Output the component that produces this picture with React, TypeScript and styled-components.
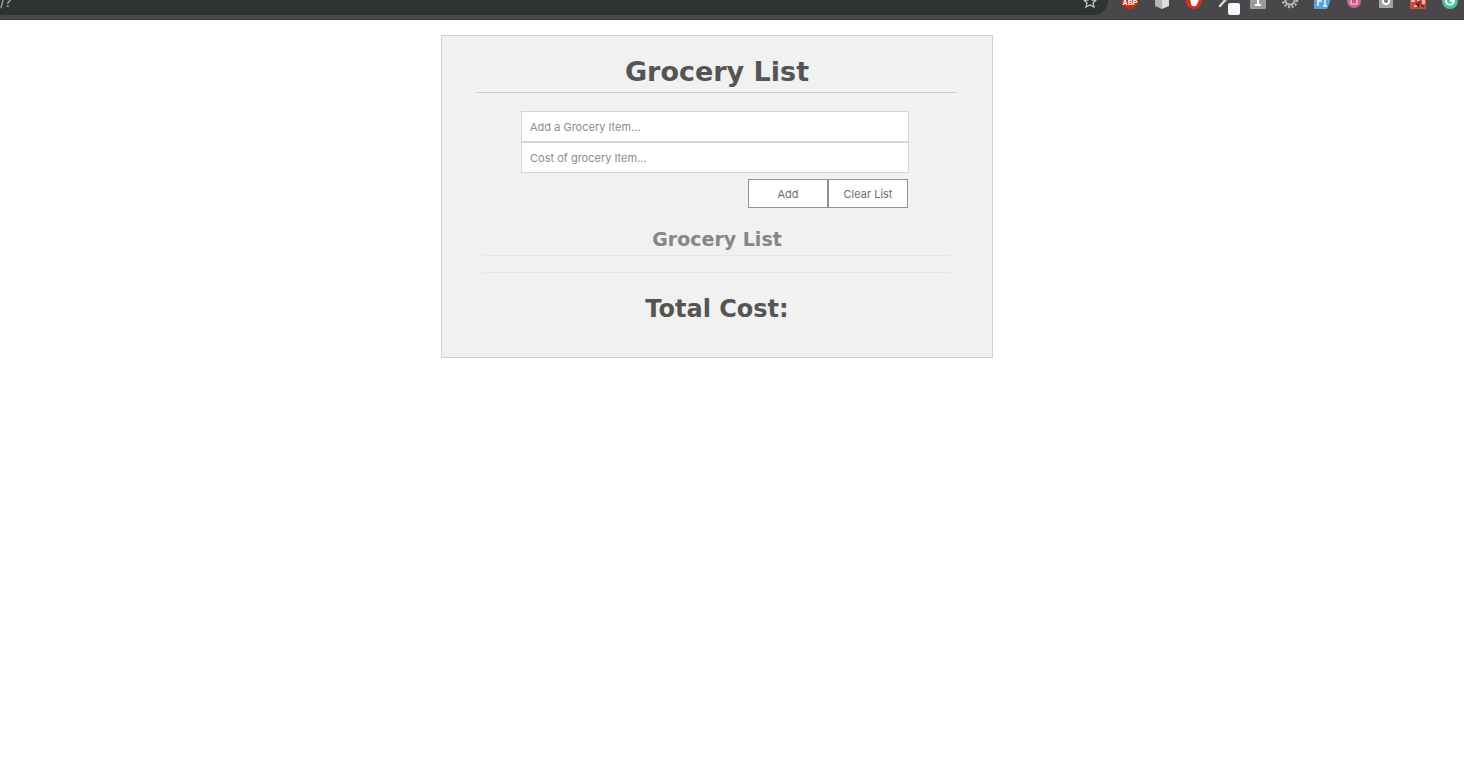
import React, { useState } from "react";
import styled, { createGlobalStyle } from "styled-components";

const GlobalStyle = createGlobalStyle`
  * { box-sizing: border-box; }
  body { margin: 0; background: #fff; font-family: Inter, "Liberation Sans", sans-serif; }
  h1, h2, h3 { margin: 0; font-family: Verdana, "DejaVu Sans", sans-serif; font-weight: 700; text-align: center; }
`;

const Toolbar = styled.header`
  display: flex;
  align-items: flex-start;
  gap: 6px;
  height: 20px;
  overflow: hidden;
  background: #4a474b;
  border-bottom: 1px solid #413639;
`;

const AddressBar = styled.div`
  flex: 1;
  display: flex;
  justify-content: space-between;
  height: 15px;
  padding-right: 10px;
  background: #2f3334;
  border-bottom-right-radius: 14px 15px;
`;

const AddressText = styled.span`
  height: 10px;
  font-size: 13px;
  line-height: 4px;
  color: #b4b6b7;
`;

const Extensions = styled.div`
  flex: none;
  display: flex;
  width: 350px;
  overflow: hidden;
`;

const Icon = styled.svg`
  flex: none;
  display: block;
  width: 32px;
  height: 19px;
`;

const StarIcon = styled.svg`
  display: block;
  width: 16px;
  height: 15px;
`;

const Page = styled.main`
  display: flex;
  justify-content: center;
  padding: 15px 30px 15px 0;
`;

const Card = styled.section`
  width: 552px;
  max-width: 100%;
  padding: 18px 35px 33px;
  background: #f1f1f1;
  border: 1px solid #d0d0d0;
`;

const Title = styled.h1`
  padding-bottom: 2px;
  border-bottom: 1px solid #d0d0d0;
  font-size: 27px;
  line-height: 36px;
  color: #555;
`;

const Form = styled.form`
  display: flex;
  flex-direction: column;
  margin: 18px 48px 0 44px;
`;

const Field = styled.input`
  width: 100%;
  height: 31px;
  padding: 0 8px;
  border: 1px solid #d6d6d6;
  border-radius: 0;
  background: #fff;
  color: #555;
  font: 11px Inter, "Liberation Sans", sans-serif;
  &::placeholder { color: #8c8c8c; opacity: 1; }
`;

const Actions = styled.div`
  display: flex;
  justify-content: flex-end;
  padding: 6px 1px 0 0;
`;

const Button = styled.button`
  width: 80px;
  height: 29px;
  padding: 0;
  border: 1px solid #929292;
  border-radius: 0;
  background: #fff;
  color: #6c6c6c;
  font: 11px Inter, "Liberation Sans", sans-serif;
`;

const ListSection = styled.div`
  margin: 19px 6px 0;
`;

const ListTitle = styled.h3`
  padding-bottom: 4px;
  border-bottom: 1px solid #e6e6e6;
  font-size: 19px;
  line-height: 24px;
  color: #868686;
`;

const Items = styled.ul`
  min-height: 17px;
  margin: 0;
  padding: 8px 0;
  border-bottom: 1px solid #e6e6e6;
  list-style: none;
  font-size: 11px;
  line-height: 20px;
  color: #555;
`;

const Total = styled.h2`
  margin-top: 21px;
  font-size: 24px;
  line-height: 30px;
  color: #555;
`;

function ExtensionIcons() {
  return (
    <Extensions>
      <Icon viewBox="0 0 32 19" role="img" aria-label="Ad blocker">
        <path d="M8-3 13-8h6l5 5v7l-5 5h-6L8 4Z" fill="#c92a14" />
        <text x="16" y="5" textAnchor="middle" fontFamily="Liberation Sans, sans-serif" fontSize="7" fontWeight="700" fill="#fff">ABP</text>
      </Icon>
      <Icon viewBox="0 0 32 19" aria-hidden="true">
        <path d="M9-4 16-1v10L9 6Z" fill="#b5b5b5" />
        <path d="M23-4 16-1v10l7-3Z" fill="#dedede" />
      </Icon>
      <Icon viewBox="0 0 32 19" aria-hidden="true">
        <circle cx="16" cy="1" r="8" fill="#d92d22" />
        <path d="M12-2h7v3l1-2 1 1-2 4c-1 3-5 3-6 0Z" fill="#fff" />
      </Icon>
      <Icon viewBox="0 0 32 19" aria-hidden="true">
        <path d="m10 6 7-8" stroke="#d5d5d5" strokeWidth="2.5" strokeLinecap="round" />
        <rect x="18" y="3" width="12" height="12" rx="2" fill="#f7f8fd" />
      </Icon>
      <Icon viewBox="0 0 32 19" aria-hidden="true">
        <rect x="8" y="-7" width="16" height="16" rx="1" fill="#9b9b9b" />
        <path d="M13 5h6M16 5v-8" stroke="#fff" strokeWidth="2" />
      </Icon>
      <Icon viewBox="0 0 32 19" aria-hidden="true">
        <circle cx="16" cy="0" r="4.5" fill="none" stroke="#b9b9b9" strokeWidth="2.5" />
        <circle cx="16" cy="0" r="7" fill="none" stroke="#b9b9b9" strokeWidth="2.5" strokeDasharray="2 1.66" />
        <circle cx="16" cy="0" r="3.5" fill="#555" />
      </Icon>
      <Icon viewBox="0 0 32 19" aria-hidden="true">
        <path d="M8-7h16v9l-3 7H8Z" fill="#5aa2dc" />
        <path d="M12 6v-8M12 1h4M19 0v6M17 6h4" stroke="#eaf4fd" strokeWidth="1.5" />
      </Icon>
      <Icon viewBox="0 0 32 19" aria-hidden="true">
        <circle cx="16" cy="1" r="7" fill="#d3618f" />
        <rect x="13" y="-3" width="6" height="7" rx="1" fill="#c85584" stroke="#f7d9e5" strokeWidth="1.2" />
      </Icon>
      <Icon viewBox="0 0 32 19" aria-hidden="true">
        <rect x="9" y="-7" width="14" height="15" rx="1" fill="#a3a3a3" />
        <circle cx="16" cy="1" r="3" fill="#777" stroke="#fff" strokeWidth="2" />
      </Icon>
      <Icon viewBox="0 0 32 19" aria-hidden="true">
        <path d="M8-7h16V9H8Z" fill="#c24d3b" />
        <path d="M9 0h4v2H9ZM15-1h3v2h-3ZM20 0h3v4h-3ZM12 5h3v2h-3Z" fill="#f1b2a0" />
        <path d="m14 3 3 4M18 1l-2 5M19 5l3 2" stroke="#542019" strokeWidth="1.5" />
      </Icon>
      <Icon viewBox="0 0 32 19" aria-hidden="true">
        <circle cx="16" cy="1" r="8" fill="#4cc09c" />
        <path d="M12-2v2c0 6 7 6 8 1h-4" fill="none" stroke="#e7fff7" strokeWidth="1.8" />
      </Icon>
    </Extensions>
  );
}

type Item = { name: string; cost: number };

export default function App() {
  const [items, setItems] = useState<Item[]>([]);
  const [name, setName] = useState("");
  const [cost, setCost] = useState("");
  const total = items.reduce((sum, item) => sum + item.cost, 0);

  const addItem = (event: React.FormEvent) => {
    event.preventDefault();
    if (!name) return;
    setItems([...items, { name, cost: Number(cost) || 0 }]);
    setName("");
    setCost("");
  };

  return (
    <>
      <GlobalStyle />
      <Toolbar>
        <AddressBar>
          <AddressText>/?</AddressText>
          <StarIcon viewBox="0 0 16 15" role="img" aria-label="Bookmark">
            <path d="m8-5 2 5h4l-3 3 1 4-4-2-4 2 1-4-3-3h4Z" fill="none" stroke="#c4c6c7" strokeWidth="1.3" />
          </StarIcon>
        </AddressBar>
        <ExtensionIcons />
      </Toolbar>
      <Page>
        <Card>
          <Title>Grocery List</Title>
          <Form onSubmit={addItem}>
            <Field aria-label="Grocery item" placeholder="Add a Grocery Item..." value={name} onChange={(e) => setName(e.target.value)} />
            <Field aria-label="Cost of grocery item" placeholder="Cost of grocery Item..." value={cost} onChange={(e) => setCost(e.target.value)} />
            <Actions>
              <Button type="submit">Add</Button>
              <Button type="button" onClick={() => setItems([])}>Clear List</Button>
            </Actions>
          </Form>
          <ListSection>
            <ListTitle>Grocery List</ListTitle>
            <Items>
              {items.map((item, index) => (
                <li key={index}>{item.name}: ${item.cost}</li>
              ))}
            </Items>
          </ListSection>
          <Total>Total Cost:{items.length > 0 && ` $${total}`}</Total>
        </Card>
      </Page>
    </>
  );
}
